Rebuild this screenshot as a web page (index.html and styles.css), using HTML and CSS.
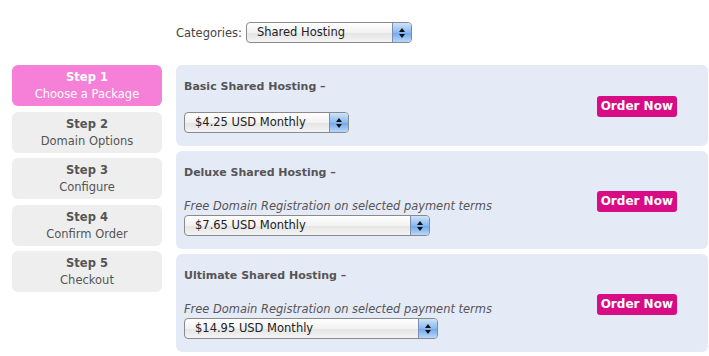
FILE: index.html
```html
<!DOCTYPE html>
<html lang="en">
<head>
	<meta charset="UTF-8">
	<title>Order</title>
	<link rel="stylesheet" href="styles.css">
</head>
<body>
	<div class="page">
		<div class="cats">
			<span class="cats-label">Categories:</span>
			<div class="sel sel-cat"><span class="sel-text">Shared Hosting</span><span class="sel-btn"><i class="up"></i><i class="down"></i></span></div>
		</div>
		<div class="main">
			<ul class="steps">
				<li class="on"><b>Step 1</b><span>Choose a Package</span></li>
				<li><b>Step 2</b><span>Domain Options</span></li>
				<li><b>Step 3</b><span>Configure</span></li>
				<li><b>Step 4</b><span>Confirm Order</span></li>
				<li><b>Step 5</b><span>Checkout</span></li>
			</ul>
			<div class="packages">
				<div class="pkg">
					<div class="info">
						<div class="name">Basic Shared Hosting –</div>
						<div class="blank"></div>
						<div class="sel sel-basic"><span class="sel-text">$4.25 USD Monthly</span><span class="sel-btn"><i class="up"></i><i class="down"></i></span></div>
					</div>
					<a class="order" href="#">Order Now</a>
				</div>
				<div class="pkg">
					<div class="info">
						<div class="name">Deluxe Shared Hosting –</div>
						<div class="blank"></div>
						<div class="note">Free Domain Registration on selected payment terms</div>
						<div class="sel sel-deluxe"><span class="sel-text">$7.65 USD Monthly</span><span class="sel-btn"><i class="up"></i><i class="down"></i></span></div>
					</div>
					<a class="order" href="#">Order Now</a>
				</div>
				<div class="pkg">
					<div class="info">
						<div class="name">Ultimate Shared Hosting –</div>
						<div class="blank"></div>
						<div class="note">Free Domain Registration on selected payment terms</div>
						<div class="sel sel-ultimate"><span class="sel-text">$14.95 USD Monthly</span><span class="sel-btn"><i class="up"></i><i class="down"></i></span></div>
					</div>
					<a class="order" href="#">Order Now</a>
				</div>
			</div>
		</div>
	</div>
</body>
</html>
```

FILE: styles.css
```css
* {
	margin: 0;
	padding: 0;
	box-sizing: border-box;
}
body {
	background: #fff;
	font-family: "DejaVu Sans", Verdana, sans-serif;
	font-size: 11px;
	color: #555;
}
.page {
	padding: 22px 0 0 12px;
}
.cats {
	display: flex;
	align-items: center;
	margin-left: 164px;
	height: 21px;
}
.cats-label {
	color: #444;
	margin-right: 4px;
	font-size: 11.5px;
}
.main {
	display: flex;
	gap: 14px;
	margin-top: 22px;
}

/* steps */
.steps {
	list-style: none;
	width: 150px;
	display: flex;
	flex-direction: column;
	gap: 5.5px;
}
.steps li {
	height: 41px;
	padding-top: 4px;
	background: #eeeeee;
	border-radius: 6px;
	text-align: center;
	line-height: 17px;
	color: #555;
	font-size: 11.5px;
}
.steps li b,
.steps li span {
	display: block;
}
.steps li.on {
	background: #f680d7;
	color: #fff;
}

/* packages */
.packages {
	width: 532px;
	display: flex;
	flex-direction: column;
	gap: 5px;
}
.pkg {
	display: flex;
	align-items: center;
	background: #e5eaf7;
	border-radius: 6px;
	padding: 13px 31px 13px 8px;
	line-height: 17px;
}
.info {
	flex: 1;
}
.name {
	font-weight: bold;
	color: #555;
}
.blank {
	height: 17px;
}
.note {
	font-style: italic;
	font-size: 11.45px;
	color: #555;
}
.order {
	display: block;
	background: #d80c84;
	color: #fff;
	font-weight: bold;
	font-size: 12px;
	text-decoration: none;
	line-height: 21px;
	padding: 0 4px;
	border-radius: 3px;
	margin-top: 2px;
}

/* fake aqua selects */
.sel {
	display: flex;
	height: 21px;
	border: 1px solid #8a8a8a;
	border-radius: 4px;
	background: linear-gradient(#ffffff, #f2f2f2 50%, #e4e4e4 51%, #f4f4f4);
	overflow: hidden;
	color: #222;
}
.sel-text {
	flex: 1;
	padding-left: 10px;
	line-height: 19px;
	font-size: 11.5px;
}
.sel-btn {
	width: 19px;
	border-left: 1px solid #7a8fb0;
	background: linear-gradient(#cfe3fa, #8ab9ef 50%, #6ea6ea 51%, #b8d8fb);
	display: flex;
	flex-direction: column;
	align-items: center;
	justify-content: center;
	gap: 2px;
}
.sel-btn i {
	width: 0;
	height: 0;
	border-left: 3px solid transparent;
	border-right: 3px solid transparent;
}
.sel-btn .up {
	border-bottom: 4px solid #111;
}
.sel-btn .down {
	border-top: 4px solid #111;
}
.sel-cat {
	width: 166px;
}
.sel-basic {
	width: 165px;
}
.sel-deluxe {
	width: 246px;
}
.sel-ultimate {
	width: 254px;
}
```
